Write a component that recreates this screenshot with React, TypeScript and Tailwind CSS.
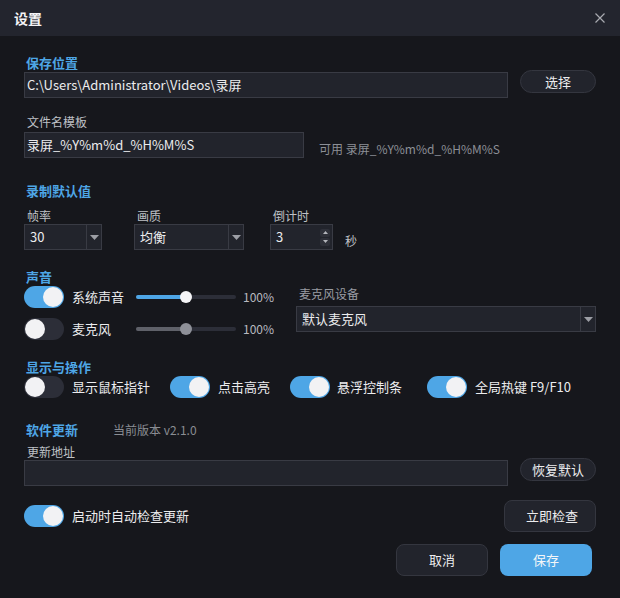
import React from 'react';

const Arrow = () => (
  <svg width="9" height="5" viewBox="0 0 9 5">
    <polygon points="0,0 9,0 4.5,5" fill="#9c9ea5" />
  </svg>
);

function Toggle({ on }: { on: boolean }) {
  return (
    <div
      className={`relative h-[22px] w-[40px] shrink-0 rounded-full ${on ? 'bg-[#4ea6e6]' : 'bg-[#2c2e38]'}`}
    >
      <div
        className={`absolute top-[1px] h-[20px] w-[20px] rounded-full bg-[#f2f2f4] ${on ? 'right-[1px]' : 'left-[1px]'}`}
      />
    </div>
  );
}

function Select({ value, width, arrowW }: { value: string; width: string; arrowW: string }) {
  return (
    <div className={`flex h-[26px] ${width} border border-[#393b44] bg-[#22242c]`}>
      <div className="flex flex-1 items-center pl-[5px] text-[13px] text-[#ececee]">{value}</div>
      <div className={`flex ${arrowW} items-center justify-center border-l border-[#393b44]`}>
        <Arrow />
      </div>
    </div>
  );
}

function Slider({ on }: { on: boolean }) {
  return (
    <div className="relative h-[12px] w-[100px]">
      <div className="absolute left-0 top-[4px] h-[4px] w-[100px] rounded-full bg-[#2c2e38]" />
      <div
        className={`absolute left-0 top-[4px] h-[4px] w-[50px] rounded-full ${on ? 'bg-[#4ea6e6]' : 'bg-[#5f6169]'}`}
      />
      <div
        className={`absolute left-[44px] top-0 h-[12px] w-[12px] rounded-full ${on ? 'bg-[#f4f4f6]' : 'bg-[#8e9098]'}`}
      />
    </div>
  );
}

const Heading = ({ children }: { children: React.ReactNode }) => (
  <div className="h-[16px] pl-[2px] text-[13px] font-bold leading-[16px] text-[#4ea6e6]">{children}</div>
);

const Label = ({ children }: { children: React.ReactNode }) => (
  <div className="h-[16px] pl-[3px] text-[12px] leading-[16px] text-[#bfc1c6]">{children}</div>
);

const PillButton = ({ children }: { children: React.ReactNode }) => (
  <button className="-mt-[2px] ml-[12px] flex h-[23px] w-[76px] items-center justify-center rounded-full border border-[#34363f] bg-[#22242c] text-[13px] text-[#ececee]">
    {children}
  </button>
);

export default function App() {
  return (
    <div className="h-[598px] w-[620px] overflow-hidden bg-[#16171c] font-['Noto_Sans_CJK_SC',sans-serif] text-[#ececee]">
      {/* title bar */}
      <div className="flex h-[36px] items-center justify-between bg-[#23252e] pl-[14px] pr-[15px]">
        <span className="text-[14px] font-bold text-[#f4f4f6]">设置</span>
        <svg width="10" height="10" viewBox="0 0 10 10">
          <path d="M0.5 0.5 L9.5 9.5 M9.5 0.5 L0.5 9.5" stroke="#a8aab0" strokeWidth="1.2" />
        </svg>
      </div>

      <div className="px-[24px] pt-[19px]">
        <Heading>保存位置</Heading>
        <div className="mt-[1px] flex items-start">
          <div className="flex h-[26px] flex-1 items-center border border-[#393b44] bg-[#22242c] pl-[2px] text-[13px]">
            C:\Users\Administrator\Videos\录屏
          </div>
          <PillButton>选择</PillButton>
        </div>

        <div className="mt-[16px]">
          <Label>文件名模板</Label>
        </div>
        <div className="mt-[2px] flex items-end">
          <div className="flex h-[26px] w-[280px] items-center border border-[#393b44] bg-[#22242c] pl-[2px] text-[13px]">
            录屏_%Y%m%d_%H%M%S
          </div>
          <div className="mb-[1px] ml-[15px] text-[12px] leading-[16px] text-[#8c8f96]">可用 录屏_%Y%m%d_%H%M%S</div>
        </div>

        <div className="mt-[25px]">
          <Heading>录制默认值</Heading>
        </div>
        <div className="mt-[9px] flex items-end">
          <div className="flex flex-col">
            <Label>帧率</Label>
            <Select value="30" width="w-[78px]" arrowW="w-[15px]" />
          </div>
          <div className="ml-[32px] flex flex-col">
            <Label>画质</Label>
            <Select value="均衡" width="w-[110px]" arrowW="w-[15px]" />
          </div>
          <div className="ml-[26px] flex flex-col">
            <Label>倒计时</Label>
            <div className="flex h-[26px] w-[63px] items-center justify-between border border-[#393b44] bg-[#22242c] pl-[5px] pr-[2px] text-[13px]">
              <span>3</span>
              <div className="flex flex-col gap-[1px]">
                <div className="flex h-[8px] w-[10px] items-center justify-center rounded-[2px] bg-[#2e3039]">
                  <svg width="5" height="3" viewBox="0 0 5 3">
                    <polygon points="0,3 5,3 2.5,0" fill="#b4b6bc" />
                  </svg>
                </div>
                <div className="flex h-[8px] w-[10px] items-center justify-center rounded-[2px] bg-[#2e3039]">
                  <svg width="5" height="3" viewBox="0 0 5 3">
                    <polygon points="0,0 5,0 2.5,3" fill="#b4b6bc" />
                  </svg>
                </div>
              </div>
            </div>
          </div>
          <div className="mb-[1px] ml-[12px] text-[12px] leading-[16px] text-[#bfc1c6]">秒</div>
        </div>

        <div className="mt-[19px]">
          <Heading>声音</Heading>
        </div>
        <div className="mt-[1px] flex items-start">
          <div className="flex flex-col gap-[10px]">
            <div className="flex h-[22px] items-center">
              <Toggle on />
              <span className="ml-[8px] w-[64px] text-[13px]">系统声音</span>
              <Slider on />
              <span className="ml-[7px] text-[12px] text-[#b8bac0]">100%</span>
            </div>
            <div className="flex h-[22px] items-center">
              <Toggle on={false} />
              <span className="ml-[8px] w-[64px] text-[13px]">麦克风</span>
              <Slider on={false} />
              <span className="ml-[7px] text-[12px] text-[#b8bac0]">100%</span>
            </div>
          </div>
          <div className="ml-auto flex w-[300px] flex-col">
            <div className="h-[16px] pl-[3px] text-[12px] leading-[16px] text-[#9a9ca3]">麦克风设备</div>
            <div className="mt-[4px]">
              <Select value="默认麦克风" width="w-[300px]" arrowW="w-[15px]" />
            </div>
          </div>
        </div>

        <div className="mt-[19px]">
          <Heading>显示与操作</Heading>
        </div>
        <div className="mt-[1px] flex h-[22px] items-center text-[13px]">
          <div className="flex w-[146px] items-center">
            <Toggle on={false} />
            <span className="ml-[8px]">显示鼠标指针</span>
          </div>
          <div className="flex w-[120px] items-center">
            <Toggle on />
            <span className="ml-[8px]">点击高亮</span>
          </div>
          <div className="flex w-[137px] items-center">
            <Toggle on />
            <span className="ml-[7px]">悬浮控制条</span>
          </div>
          <div className="flex items-center">
            <Toggle on />
            <span className="ml-[8px]">全局热键 F9/F10</span>
          </div>
        </div>

        <div className="mt-[24px] flex items-center">
          <Heading>软件更新</Heading>
          <span className="ml-[35px] text-[12px] leading-[16px] text-[#8a8d93]">当前版本 v2.1.0</span>
        </div>
        <div className="mt-[6px]">
          <Label>更新地址</Label>
        </div>
        <div className="flex items-start">
          <div className="h-[26px] flex-1 border border-[#393b44] bg-[#22242c]" />
          <PillButton>恢复默认</PillButton>
        </div>

        <div className="mt-[14px] flex h-[32px] items-center">
          <Toggle on />
          <span className="ml-[8px] text-[13px]">启动时自动检查更新</span>
          <button className="ml-auto flex h-[32px] w-[92px] items-center justify-center rounded-[8px] border border-[#34363f] bg-[#22242c] pl-[4px] text-[13px] text-[#ececee]">
            立即检查
          </button>
        </div>

        <div className="mt-[12px] flex justify-end gap-[12px] pr-[4px]">
          <button className="flex h-[32px] w-[92px] items-center justify-center rounded-[8px] border border-[#34363f] bg-[#22242c] text-[13px] text-[#ececee]">
            取消
          </button>
          <button className="flex h-[32px] w-[92px] items-center justify-center rounded-[8px] bg-[#4ea6e6] text-[13px] text-[#f4f6f8]">
            保存
          </button>
        </div>
      </div>
    </div>
  );
}
